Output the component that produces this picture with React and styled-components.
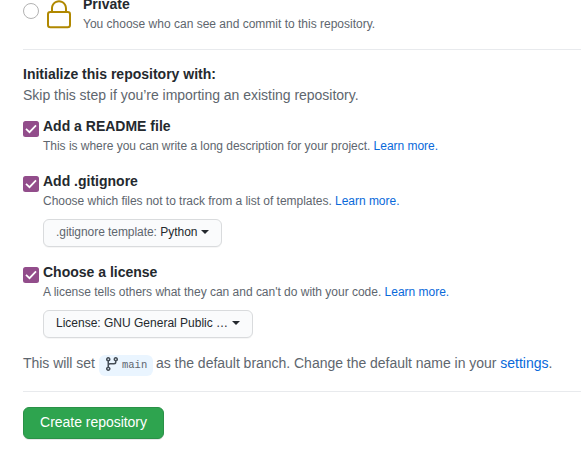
import React from "react";
import styled, { createGlobalStyle } from "styled-components";

const GlobalStyle = createGlobalStyle`
  * { box-sizing: border-box; }
  body {
    margin: 0;
    background: #fff;
    color: #24292e;
    font: 14px/21px "Liberation Sans", Arial, sans-serif;
    overflow: hidden;
  }
`;

const Page = styled.main`
  height: 454px;
  padding-left: 23px;
  overflow: hidden;
  white-space: nowrap;
`;

const VisibilityRow = styled.label`
  display: flex;
  align-items: flex-start;
  height: 49px;
`;

const Radio = styled.span`
  width: 16px;
  height: 16px;
  margin-top: 3px;
  border: 1px solid #b2b2b2;
  border-radius: 50%;
`;

const LockIcon = styled.svg`
  width: 32px;
  height: 32px;
  margin: -1px 8px 0 4px;
  fill: #b08800;
`;

const VisibilityText = styled.div`
  margin-top: -6px;
`;

const Title = styled.div`
  font-weight: bold;
  line-height: 21px;
`;

const Description = styled.div`
  color: #5e666e;
  font-size: 12px;
  line-height: 18px;
  letter-spacing: ${({ $tracking = 0 }) => $tracking}px;
`;

const Divider = styled.hr`
  height: 1px;
  margin: 0;
  border: 0;
  background: #e8eaed;
`;

const Intro = styled.section`
  padding-top: 14px;
  margin-bottom: 10px;
`;

const Muted = styled.div`
  color: #5e666e;
  letter-spacing: -0.02px;
`;

const Option = styled.section`
  display: flex;
  gap: 4px;
  margin-bottom: ${({ $gap }) => $gap}px;
`;

const Checkbox = styled.span`
  display: flex;
  width: 16px;
  height: 16px;
  margin-top: 5px;
  border-radius: 2.5px;
  background: #924d8b;
`;

const Link = styled.a`
  color: #0969da;
  text-decoration: none;
`;

const SelectButton = styled.button`
  display: flex;
  align-items: center;
  width: ${({ $width }) => $width}px;
  height: 28px;
  margin-top: 9px;
  padding: 0 0 2px 12px;
  border: 1px solid #d9dbdd;
  border-radius: 6px;
  background: #fafbfc;
  box-shadow: 0 1px 0 rgba(27, 31, 35, 0.04);
  color: #24292e;
  font: 12px/20px "Liberation Sans", Arial, sans-serif;
  white-space: pre;
`;

const SelectLabel = styled.span`
  color: #5e666e;
  letter-spacing: -0.06px;
`;

const Caret = styled.span`
  margin-left: ${({ $offset = 4 }) => $offset}px;
  border: 4px solid transparent;
  border-top-color: currentColor;
  border-bottom: 0;
`;

const BranchNote = styled.p`
  display: flex;
  height: 38px;
  margin: 0;
  color: #5e666e;
  white-space: pre;
`;

const BranchLead = styled.span`
  width: 76px;
  letter-spacing: -0.04px;
`;

const BranchTail = styled.span`
  letter-spacing: -0.022px;
`;

const BranchName = styled.span`
  display: flex;
  align-items: center;
  width: 54px;
  height: 21px;
  margin: 2px 3px 0 0;
  padding: 0 0 1px 5px;
  border-radius: 6px;
  background: #eaf5ff;
  font: 10.5px/18px "Liberation Mono", monospace;
`;

const BranchIcon = styled.svg`
  width: 16px;
  height: 16px;
  margin: -2px 2px 0 0;
  fill: #444d56;
`;

const CreateButton = styled.button`
  display: block;
  width: 141px;
  height: 32px;
  margin-top: 15px;
  padding: 0 0 2px;
  border: 1px solid #2a9147;
  border-radius: 6px;
  background: #2ea44f;
  box-shadow: 0 1px 0 rgba(27, 31, 35, 0.1);
  color: #fff;
  font: 14px/20px "Liberation Sans", Arial, sans-serif;
  letter-spacing: -0.03px;
`;

function InitOption({ title, description, gap, tracking, children }) {
  return (
    <Option $gap={gap}>
      <Checkbox>
        <svg width="16" height="16" viewBox="0 0 16 16" fill="none" stroke="#fff" strokeWidth="1.7">
          <path d="M3 7.8 6.5 11.2 13 4.3" />
        </svg>
      </Checkbox>
      <div>
        <Title>{title}</Title>
        <Description $tracking={tracking}>
          {description} <Link>Learn more.</Link>
        </Description>
        {children}
      </div>
    </Option>
  );
}

export default function App() {
  return (
    <>
      <GlobalStyle />
      <Page>
        <VisibilityRow>
          <Radio />
          <LockIcon viewBox="0 0 24 24">
            <path
              fillRule="evenodd"
              d="M6 9V7.25C6 3.845 8.503 1 12 1s6 2.845 6 6.25V9h.5a2.5 2.5 0 012.5 2.5v8a2.5 2.5 0 01-2.5 2.5h-13A2.5 2.5 0 013 19.5v-8A2.5 2.5 0 015.5 9H6zm1.5-1.75C7.5 4.58 9.422 2.5 12 2.5c2.578 0 4.5 2.08 4.5 4.75V9h-9V7.25zm-3 4.25a1 1 0 011-1h13a1 1 0 011 1v8a1 1 0 01-1 1h-13a1 1 0 01-1-1v-8z"
            />
          </LockIcon>
          <VisibilityText>
            <Title>Private</Title>
            <Description>You choose who can see and commit to this repository.</Description>
          </VisibilityText>
        </VisibilityRow>
        <Divider />
        <Intro>
          <Title>Initialize this repository with:</Title>
          <Muted>Skip this step if you’re importing an existing repository.</Muted>
        </Intro>
        <InitOption
          title="Add a README file"
          description="This is where you can write a long description for your project."
          gap={16}
          tracking={-0.024}
        />
        <InitOption
          title="Add .gitignore"
          description="Choose which files not to track from a list of templates."
          gap={15}
          tracking={-0.025}
        >
          <SelectButton $width={179}>
            <SelectLabel>.gitignore template: </SelectLabel>
            Python
            <Caret $offset={3} />
          </SelectButton>
        </InitOption>
        <InitOption
          title="Choose a license"
          description="A license tells others what they can and can't do with your code."
          gap={15}
          tracking={-0.014}
        >
          <SelectButton $width={210}>
            License: GNU General Public …
            <Caret />
          </SelectButton>
        </InitOption>
        <BranchNote>
          <BranchLead>This will set </BranchLead>
          <BranchName>
            <BranchIcon viewBox="0 0 16 16">
              <path
                fillRule="evenodd"
                d="M11.75 2.5a.75.75 0 100 1.5.75.75 0 000-1.5zm-2.25.75a2.25 2.25 0 113 2.122V6A2.5 2.5 0 0110 8.5H6a1 1 0 00-1 1v1.128a2.251 2.251 0 11-1.5 0V5.372a2.25 2.25 0 111.5 0v1.836A2.492 2.492 0 016 7h4a1 1 0 001-1v-.628A2.25 2.25 0 019.5 3.25zM4.25 12a.75.75 0 100 1.5.75.75 0 000-1.5zM3.5 3.25a.75.75 0 111.5 0 .75.75 0 01-1.5 0z"
              />
            </BranchIcon>
            main
          </BranchName>
          <BranchTail>
            as the default branch. Change the default name in your <Link>settings</Link>.
          </BranchTail>
        </BranchNote>
        <Divider />
        <CreateButton>Create repository</CreateButton>
      </Page>
    </>
  );
}
